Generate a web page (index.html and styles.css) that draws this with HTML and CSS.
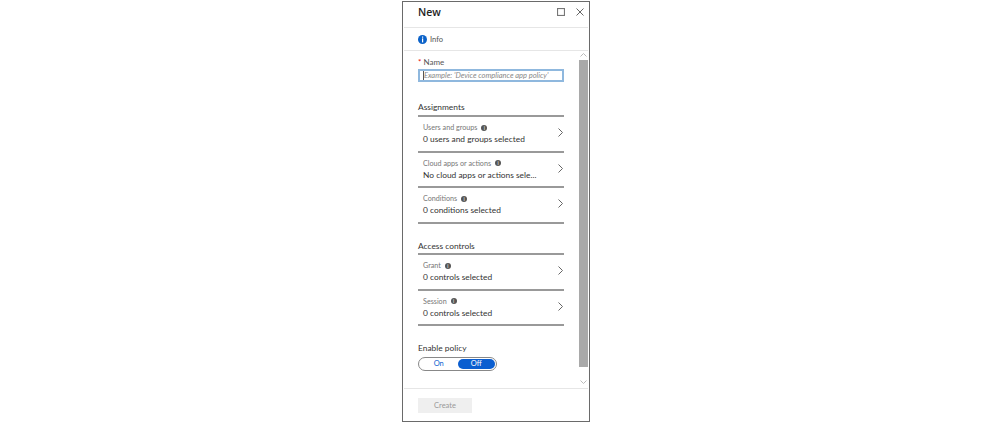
FILE: index.html
```html
<!DOCTYPE html>
<html>
<head>
    <title>New</title>

    <link rel="stylesheet" href="styles.css">
</head>
<body>
    <div class="panel">
        <div class="header">
            <span class="title">New</span>
            <svg class="win-icon" width="8" height="8" viewBox="0 0 8 8"><rect x="0.5" y="0.5" width="7" height="7" fill="none" stroke="#777" stroke-width="1.2"/></svg>
            <svg class="win-icon" width="8" height="8" viewBox="0 0 8 8"><path d="M0.5 0.5L7.5 7.5M7.5 0.5L0.5 7.5" fill="none" stroke="#666"/></svg>
        </div>
        <div class="info-bar">
            <svg width="9" height="9" viewBox="0 0 9 9"><circle cx="4.5" cy="4.5" r="4.5" fill="#0b62c9"/><rect x="4" y="1.5" width="1.2" height="1.2" fill="#fff"/><rect x="4" y="3.4" width="1.2" height="4" fill="#fff"/></svg>
            <span>Info</span>
        </div>
        <div class="body">
            <div class="content">
                <div class="field-label"><span class="req">*</span> Name</div>
                <div class="input"><span class="caret"></span>Example: 'Device compliance app policy'</div>

                <div class="section-title first">Assignments</div>
                <div class="row">
                    <div class="row-text">
                        <div class="row-label">Users and groups <i class="dot">i</i></div>
                        <div class="row-value">0 users and groups selected</div>
                    </div>
                    <svg class="chev" width="5" height="9" viewBox="0 0 5 9"><path d="M0.5 0.5L4.5 4.5L0.5 8.5" fill="none" stroke="#666"/></svg>
                </div>
                <div class="row">
                    <div class="row-text">
                        <div class="row-label">Cloud apps or actions <i class="dot">i</i></div>
                        <div class="row-value">No cloud apps or actions sele...</div>
                    </div>
                    <svg class="chev" width="5" height="9" viewBox="0 0 5 9"><path d="M0.5 0.5L4.5 4.5L0.5 8.5" fill="none" stroke="#666"/></svg>
                </div>
                <div class="row">
                    <div class="row-text">
                        <div class="row-label">Conditions <i class="dot">i</i></div>
                        <div class="row-value">0 conditions selected</div>
                    </div>
                    <svg class="chev" width="5" height="9" viewBox="0 0 5 9"><path d="M0.5 0.5L4.5 4.5L0.5 8.5" fill="none" stroke="#666"/></svg>
                </div>

                <div class="section-title second">Access controls</div>
                <div class="row">
                    <div class="row-text">
                        <div class="row-label">Grant <i class="dot">i</i></div>
                        <div class="row-value">0 controls selected</div>
                    </div>
                    <svg class="chev" width="5" height="9" viewBox="0 0 5 9"><path d="M0.5 0.5L4.5 4.5L0.5 8.5" fill="none" stroke="#666"/></svg>
                </div>
                <div class="row">
                    <div class="row-text">
                        <div class="row-label">Session <i class="dot">i</i></div>
                        <div class="row-value">0 controls selected</div>
                    </div>
                    <svg class="chev" width="5" height="9" viewBox="0 0 5 9"><path d="M0.5 0.5L4.5 4.5L0.5 8.5" fill="none" stroke="#666"/></svg>
                </div>

                <div class="enable-label">Enable policy</div>
                <div class="toggle">
                    <span class="opt">On</span>
                    <span class="opt active">Off</span>
                </div>
            </div>
            <div class="scrollbar">
                <svg width="7" height="4" viewBox="0 0 7 4"><path d="M0.5 3.5L3.5 0.5L6.5 3.5" fill="none" stroke="#bbb"/></svg>
                <div class="thumb"></div>
                <svg width="7" height="4" viewBox="0 0 7 4"><path d="M0.5 0.5L3.5 3.5L6.5 0.5" fill="none" stroke="#bbb"/></svg>
            </div>
        </div>
        <div class="footer">
            <div class="create">Create</div>
        </div>
    </div>
</body>
</html>
```

FILE: styles.css
```css
html, body {
    margin: 0;
    padding: 0;
    background-color: #fff;
}

body {
    height: 423px;
    overflow: hidden;
    font-family: Lato, "Open Sans", sans-serif;
    color: #333;
}

.panel {
    box-sizing: border-box;
    width: 188px;
    height: 421px;
    margin: 1px 0 0 402px;
    border: 1px solid #6a6a6a;
    padding: 1px;
    display: flex;
    flex-direction: column;
}

.header {
    height: 25px;
    flex: none;
    display: flex;
    align-items: center;
    padding: 0 4px 7px 14px;
    box-sizing: border-box;
    gap: 11px;
    border-bottom: 1px solid #e6e6e6;
}

.title {
    font-family: "Open Sans", sans-serif;
    font-size: 10.5px;
    font-weight: 600;
    color: #222;
    margin-right: auto;
}

.info-bar {
    height: 23px;
    flex: none;
    box-sizing: border-box;
    display: flex;
    align-items: center;
    gap: 3px;
    padding-left: 14px;
    font-size: 7.6px;
    color: #555;
    border-bottom: 1px solid #e6e6e6;
}

.body {
    flex: 1;
    min-height: 0;
    display: flex;
}

.content {
    flex: 1;
    padding: 6px 15px 0 14px;
    min-width: 0;
}

.field-label {
    font-size: 8px;
    line-height: 11px;
    color: #555;
}

.req {
    color: #e00;
}

.input {
    box-sizing: border-box;
    height: 13px;
    margin-top: 1px;
    border: 2px solid #8fb8de;
    padding-left: 4px;
    display: flex;
    align-items: center;
    font-size: 7.5px;
    font-style: italic;
    color: #888;
    white-space: nowrap;
}

.caret {
    width: 1px;
    height: 9px;
    background-color: #555;
    margin-left: -1px;
}

.section-title {
    font-size: 8.4px;
    line-height: 11px;
    color: #333;
    padding-bottom: 2px;
    border-bottom: 2px solid #999;
}

.first {
    margin-top: 20px;
}

.second {
    margin-top: 17px;
    padding-bottom: 1px;
}

.row {
    box-sizing: border-box;
    height: 35.7px;
    display: flex;
    align-items: flex-start;
    padding: 5px 0 0 5px;
    border-bottom: 2px solid #999;
}

.row-text {
    flex: 1;
    min-width: 0;
}

.row-label {
    font-size: 7.2px;
    line-height: 11px;
    color: #777;
    display: flex;
    align-items: center;
    gap: 1px;
}

.row-value {
    font-size: 8.4px;
    line-height: 12px;
    color: #333;
    white-space: nowrap;
}

.dot {
    width: 6px;
    height: 6px;
    border-radius: 50%;
    margin-left: 3px;
    background-color: #555;
    color: #fff;
    font-size: 5px;
    line-height: 6px;
    text-align: center;
    font-style: normal;
}

.chev {
    flex: none;
    margin: 6px 1px 0 0;
}

.enable-label {
    font-size: 8.4px;
    line-height: 11px;
    margin-top: 17px;
    color: #333;
}

.toggle {
    box-sizing: border-box;
    width: 79px;
    height: 14px;
    margin-top: 3px;
    border: 1px solid #888;
    border-radius: 7px;
    display: flex;
    padding: 1px;
}

.opt {
    flex: 1;
    border-radius: 6px;
    font-size: 7.5px;
    line-height: 10px;
    text-align: center;
    color: #0b5ed0;
}

.active {
    background-color: #0b5ed0;
    color: #fff;
}

.scrollbar {
    flex: none;
    width: 9px;
    display: flex;
    flex-direction: column;
    align-items: center;
    padding: 2px 0 4px;
    box-sizing: border-box;
    justify-content: space-between;
}

.thumb {
    align-self: stretch;
    flex: 1;
    margin: 3px 0 13px;
    background-color: #a9a9a9;
}

.footer {
    flex: none;
    height: 32px;
    box-sizing: border-box;
    border-top: 1px solid #e6e6e6;
    padding: 9px 0 0 14px;
}

.create {
    width: 54px;
    height: 15px;
    background-color: #efefef;
    color: #999;
    font-size: 7.5px;
    line-height: 15px;
    text-align: center;
}
```
